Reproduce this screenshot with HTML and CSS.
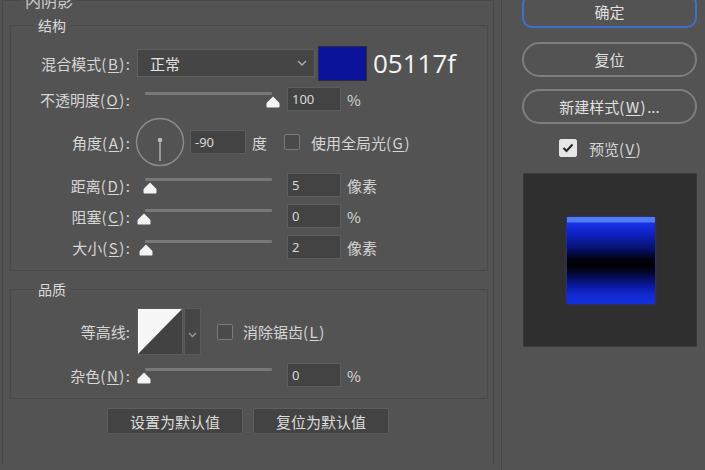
FILE: index.html
```html
<!DOCTYPE html>
<html lang="zh-CN">
<head>
<meta charset="utf-8">
<title>内阴影</title>
<link rel="stylesheet" href="styles.css">
</head>
<body>
<div class="dialog">
  <div class="main">
    <fieldset class="outer">
      <legend class="outer-title">内阴影</legend>

      <fieldset class="group structure">
        <legend class="group-title">结构</legend>

        <div class="row row-blend">
          <span class="label">混合模式<span class="k">(<u>B</u>)</span>:</span>
          <div class="select"><span>正常</span>
            <svg class="chev" width="10" height="6" viewBox="0 0 10 6"><polyline points="1,1 5,5 9,1" fill="none" stroke="#b0b0b0" stroke-width="1.4"/></svg>
          </div>
          <div class="swatch"></div>
          <span class="hex">05117f</span>
        </div>

        <div class="row row-opacity">
          <span class="label">不透明度<span class="k">(<u>O</u>)</span>:</span>
          <div class="slider"><div class="track"></div>
            <svg class="thumb" style="left:129px" width="14" height="12" viewBox="0 0 14 12"><path d="M7 0.5 L13 6.5 Q13.5 7 13.5 8 L13.5 10.5 Q13.5 11.5 12.5 11.5 L1.5 11.5 Q0.5 11.5 0.5 10.5 L0.5 8 Q0.5 7 1 6.5 Z" fill="#f4f4f4"/></svg>
          </div>
          <div class="input">100</div><span class="unit">%</span>
        </div>

        <div class="row row-angle">
          <span class="label">角度<span class="k">(<u>A</u>)</span>:</span>
          <svg class="dial" width="50" height="50" viewBox="0 0 50 50"><circle cx="25" cy="25" r="23.5" fill="none" stroke="#8a8a8a" stroke-width="1.5"/><line x1="25" y1="24" x2="25" y2="44" stroke="#a8a8a8" stroke-width="1.6"/><circle cx="25" cy="23" r="2.3" fill="#b8b8b8"/></svg>
          <div class="input input-angle">-90</div>
          <span class="unit">度</span>
          <span class="checkbox cb-global"></span>
          <span class="check-text">使用全局光<span class="k">(<u>G</u>)</span></span>
        </div>

        <div class="row row-distance">
          <span class="label">距离<span class="k">(<u>D</u>)</span>:</span>
          <div class="slider"><div class="track"></div>
            <svg class="thumb" style="left:6px" width="14" height="12" viewBox="0 0 14 12"><path d="M7 0.5 L13 6.5 Q13.5 7 13.5 8 L13.5 10.5 Q13.5 11.5 12.5 11.5 L1.5 11.5 Q0.5 11.5 0.5 10.5 L0.5 8 Q0.5 7 1 6.5 Z" fill="#f4f4f4"/></svg>
          </div>
          <div class="input">5</div><span class="unit">像素</span>
        </div>

        <div class="row row-choke">
          <span class="label">阻塞<span class="k">(<u>C</u>)</span>:</span>
          <div class="slider"><div class="track"></div>
            <svg class="thumb" style="left:0px" width="14" height="12" viewBox="0 0 14 12"><path d="M7 0.5 L13 6.5 Q13.5 7 13.5 8 L13.5 10.5 Q13.5 11.5 12.5 11.5 L1.5 11.5 Q0.5 11.5 0.5 10.5 L0.5 8 Q0.5 7 1 6.5 Z" fill="#f4f4f4"/></svg>
          </div>
          <div class="input">0</div><span class="unit">%</span>
        </div>

        <div class="row row-size">
          <span class="label">大小<span class="k">(<u>S</u>)</span>:</span>
          <div class="slider"><div class="track"></div>
            <svg class="thumb" style="left:2px" width="14" height="12" viewBox="0 0 14 12"><path d="M7 0.5 L13 6.5 Q13.5 7 13.5 8 L13.5 10.5 Q13.5 11.5 12.5 11.5 L1.5 11.5 Q0.5 11.5 0.5 10.5 L0.5 8 Q0.5 7 1 6.5 Z" fill="#f4f4f4"/></svg>
          </div>
          <div class="input">2</div><span class="unit">像素</span>
        </div>
      </fieldset>

      <fieldset class="group quality">
        <legend class="group-title">品质</legend>

        <div class="row row-contour">
          <span class="label">等高线:</span>
          <div class="contour">
            <svg class="contour-pic" width="46" height="47" viewBox="0 0 46 47"><rect x="0" y="0" width="46" height="47" fill="#424242"/><polygon points="0,0 46,0 0,47" fill="#f7f7f7"/><rect x="0.5" y="0.5" width="45" height="46" fill="none" stroke="#5c5c5c"/></svg>
            <div class="contour-drop">
              <svg width="9" height="6" viewBox="0 0 9 6"><polyline points="1,1 4.5,4.5 8,1" fill="none" stroke="#9a9a9a" stroke-width="1.3"/></svg>
            </div>
          </div>
          <span class="checkbox cb-anti"></span>
          <span class="check-text">消除锯齿<span class="k">(<u>L</u>)</span></span>
        </div>

        <div class="row row-noise">
          <span class="label">杂色<span class="k">(<u>N</u>)</span>:</span>
          <div class="slider"><div class="track"></div>
            <svg class="thumb" style="left:0px" width="14" height="12" viewBox="0 0 14 12"><path d="M7 0.5 L13 6.5 Q13.5 7 13.5 8 L13.5 10.5 Q13.5 11.5 12.5 11.5 L1.5 11.5 Q0.5 11.5 0.5 10.5 L0.5 8 Q0.5 7 1 6.5 Z" fill="#f4f4f4"/></svg>
          </div>
          <div class="input">0</div><span class="unit">%</span>
        </div>
      </fieldset>

      <div class="actions">
        <button class="flat-btn">设置为默认值</button>
        <button class="flat-btn">复位为默认值</button>
      </div>
    </fieldset>
  </div>

  <div class="side">
    <button class="pill primary">确定</button>
    <button class="pill">复位</button>
    <button class="pill pill-new">新建样式<span class="k">(<u>W</u>)</span>...</button>
    <div class="preview-toggle">
      <span class="checkbox checked">
        <svg width="12" height="10" viewBox="0 0 12 10"><polyline points="1.5,5 4.5,8 10.5,1.5" fill="none" stroke="#2a2a2a" stroke-width="2.2"/></svg>
      </span>
      <span class="check-text">预览<span class="k">(<u>V</u>)</span></span>
    </div>
    <div class="preview">
      <div class="sample"></div>
    </div>
  </div>
</div>
</body>
</html>
```
FILE: styles.css
```css
* { box-sizing: border-box; }
html, body { margin: 0; padding: 0; }
body {
  width: 705px;
  height: 470px;
  overflow: hidden;
  background: #535353;
  font-family: "Noto Sans CJK SC", "Noto Sans", sans-serif;
  font-size: 14px;
  color: #d6d6d6;
}
u { text-decoration-thickness: 1px; text-underline-offset: 2px; }
.k { letter-spacing: 1.5px; }

.dialog { display: flex; height: 470px; }

.main {
  width: 502px;
  flex: none;
  margin-top: -10px;
  border-right: 1px solid #464646;
}

fieldset { margin: 0; min-width: 0; }

.outer {
  margin-left: 2px;
  width: 492px;
  border: 1px solid #494949;
  border-bottom: none;
  padding: 0 5px 30px 7px;
}
.outer-title {
  font-size: 16px;
  line-height: 20px;
  padding: 0 3px;
  margin-left: 12px;
  color: #d0d0d0;
}

.group { border: 1px solid #484848; }
.group-title {
  font-size: 14px;
  line-height: 20px;
  padding: 0 4px;
  margin-left: 23px;
  color: #dcdcdc;
}

.structure { margin-top: 5px; padding: 11px 0 4px 0; }
.quality { margin-top: 9px; padding: 10px 0 11px 0; }
.quality .group-title { line-height: 18px; }

.row { display: flex; align-items: center; }
.row-blend { height: 34px; }
.row-opacity { height: 38px; }
.row-angle { height: 48px; }
.row-distance { height: 38px; }
.row-choke { height: 24px; }
.row-size { height: 38px; }
.row-contour { height: 47px; }
.row-noise { height: 24px; margin-top: 8px; }

.label {
  width: 119px;
  flex: none;
  text-align: right;
  margin-right: 7px;
  white-space: nowrap;
  font-size: 15px;
}

.select {
  width: 178px;
  height: 28px;
  background: #454545;
  border: 1px solid #5e5e5e;
  display: flex;
  align-items: center;
  justify-content: space-between;
  padding: 0 7px 0 12px;
  color: #e4e4e4;
  font-size: 15px;
}
.swatch {
  width: 49px;
  height: 35px;
  margin-left: 3px;
  background: #0a139a;
  border: 1px solid #2b2b3a;
}
.hex {
  margin-left: 6px;
  font-family: "Open Sans", "Noto Sans", sans-serif;
  font-size: 26px;
  line-height: 1;
  color: #f4f4f4;
}

.slider {
  position: relative;
  width: 143px;
  height: 24px;
  flex: none;
}
.track {
  position: absolute;
  left: 8px;
  right: 8px;
  top: 5px;
  height: 3px;
  background: #787878;
  border-radius: 1px;
}
.thumb { position: absolute; top: 9px; }

.input {
  width: 54px;
  height: 24px;
  flex: none;
  margin-left: 7px;
  background: #434343;
  border: 1px solid #5d5d5d;
  font-family: "Noto Sans", sans-serif;
  font-size: 13px;
  line-height: 22px;
  padding-left: 4px;
  color: #d8d8d8;
}
.unit { margin-left: 6px; font-size: 15px; }

.dial { margin-left: -2px; flex: none; }
.input-angle { width: 56px; margin-left: 5px; }

.checkbox {
  width: 16px;
  height: 16px;
  flex: none;
  border: 1.5px solid #7a7a7a;
  border-radius: 2px;
  background: #4a4a4a;
  display: inline-flex;
  align-items: center;
  justify-content: center;
}
.checkbox.checked { background: #e6e6e6; border-color: #e6e6e6; width: 18px; height: 18px; }
.cb-global { margin-left: 17px; }
.check-text { margin-left: 11px; white-space: nowrap; font-size: 15px; }

.contour { display: flex; height: 47px; }
.contour-pic { display: block; }
.contour-drop {
  width: 17px;
  height: 47px;
  margin-left: 1px;
  background: #464646;
  border: 1px solid #5a5a5a;
  display: flex;
  align-items: center;
  justify-content: center;
  padding-top: 6px;
}
.cb-anti { margin-left: 16px; }
.row-contour .check-text { margin-left: 10px; }

.actions {
  display: flex;
  gap: 10px;
  margin-top: 9px;
  padding-left: 97px;
}
.flat-btn {
  width: 136px;
  height: 26px;
  background: #434343;
  border: 1px solid #5d5d5d;
  border-radius: 2px;
  font-family: inherit;
  font-size: 15px;
  color: #dcdcdc;
  padding: 0;
}

.side {
  flex: 1;
  display: flex;
  flex-direction: column;
  padding-left: 20px;
}
.pill {
  width: 175px;
  height: 35px;
  border: 2px solid #7e7e7e;
  border-radius: 18px;
  background: transparent;
  font-family: inherit;
  font-size: 15px;
  color: #e0e0e0;
  padding: 0;
  margin-top: 12px;
}
.pill.primary {
  margin-top: -6px;
  height: 34px;
  border-color: #3d6fd0;
  border-radius: 10px;
}
.pill + .pill { margin-top: 14px; }
.pill.pill-new { margin-top: 12px; }

.preview-toggle {
  display: flex;
  align-items: center;
  margin-top: 15px;
  padding-left: 37px;
  height: 18px;
}
.preview-toggle .check-text { margin-left: 12px; }

.preview {
  width: 174px;
  height: 174px;
  margin-top: 16px;
  margin-left: 1px;
  background: #2f2f2f;
  border: 1px solid #3a3a3a;
  display: flex;
  align-items: center;
  justify-content: center;
}
.sample {
  width: 88px;
  height: 87px;
  margin-left: 1px;
  background: linear-gradient(to bottom,
    #4d7cf6 0, #4d7cf6 5px,
    #1a32e6 6px, #0f22c8 16px,
    #06106a 32px, #010210 42px, #000 48px,
    #030730 56px, #0a1898 68px, #1229d2 78px, #1430dc 87px);
  box-shadow: 0 0 3px rgba(40, 70, 255, 0.5);
}
```
